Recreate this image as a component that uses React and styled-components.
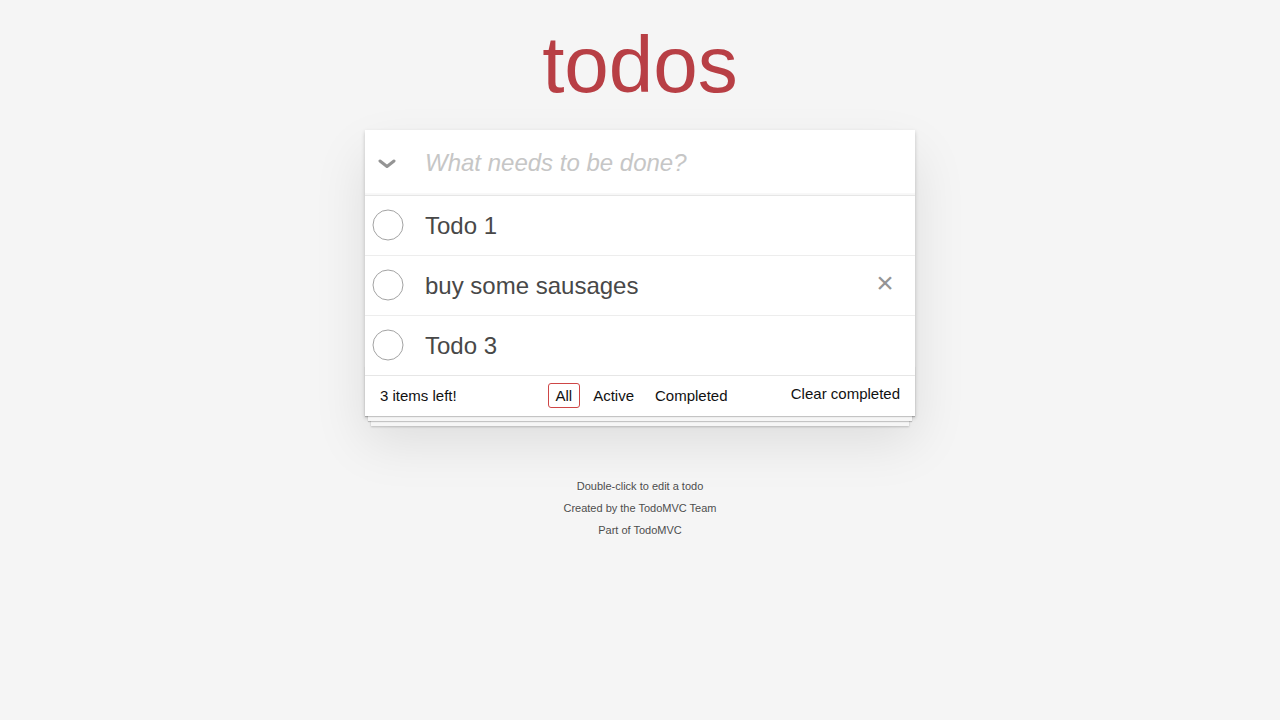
import React, { useState } from "react";
import styled, { createGlobalStyle } from "styled-components";

const GlobalStyle = createGlobalStyle`
  html, body {
    margin: 0;
    padding: 0;
  }
  body {
    font: 14px "Liberation Sans", Arial, sans-serif;
    line-height: 1.4em;
    background: #f5f5f5;
    color: #111111;
  }
`;

const Page = styled.div`
  max-width: 550px;
  min-width: 230px;
  margin: 0 auto;
`;

const Title = styled.h1`
  margin: 25px 0 0;
  height: 80px;
  font-size: 80px;
  line-height: 80px;
  font-weight: 400;
  text-align: center;
  color: #b83f45;
`;

const TodoApp = styled.section`
  background: #fff;
  margin: 25px 0 40px 0;
  position: relative;
  box-shadow: 0 2px 4px 0 rgba(0, 0, 0, 0.2), 0 25px 50px 0 rgba(0, 0, 0, 0.1);
`;

const Header = styled.header`
  display: flex;
  align-items: center;
  height: 65px;
  box-shadow: inset 0 -2px 1px rgba(0, 0, 0, 0.03);
`;

const ToggleAll = styled.button`
  width: 45px;
  height: 65px;
  margin-right: 15px;
  padding: 2px 0 0 13px;
  border: 0;
  background: none;
  display: flex;
  align-items: center;
  cursor: pointer;
`;

const NewTodo = styled.input`
  flex: 1;
  height: 65px;
  padding: 16px 16px 16px 0;
  box-sizing: border-box;
  border: none;
  outline: none;
  background: transparent;
  font-family: "Liberation Sans", Arial, sans-serif;
  font-size: 24px;
  color: #484848;

  &::placeholder {
    font-style: italic;
    font-weight: 400;
    color: #c6c6c6;
  }
`;

const List = styled.ul`
  margin: 0;
  padding: 0;
  list-style: none;
  border-top: 1px solid #e6e6e6;
`;

const Item = styled.li`
  display: flex;
  align-items: center;
  position: relative;
  height: 59px;
  font-size: 24px;
  border-bottom: 1px solid #ededed;

  &:last-child {
    border-bottom: none;
  }
`;

const Toggle = styled.span`
  width: 60px;
  height: 59px;
  display: flex;
  align-items: center;
  padding: 0 0 1px 7px;
  box-sizing: border-box;
`;

const Label = styled.label`
  flex: 1;
  padding-top: 2px;
  font-weight: 400;
  line-height: 1.2;
  color: #484848;
  word-break: break-all;
`;

const Destroy = styled.button`
  position: absolute;
  top: 0;
  bottom: 0;
  right: 10px;
  width: 40px;
  height: 40px;
  margin: auto 0;
  padding: 0 0 8px;
  border: 0;
  background: none;
  font-family: "Liberation Sans", Arial, sans-serif;
  font-size: 30px;
  line-height: 1.1;
  color: #949494;
  cursor: pointer;
  visibility: ${(p) => (p.$show ? "visible" : "hidden")};
`;

const Footer = styled.footer`
  position: relative;
  display: flex;
  align-items: center;
  justify-content: space-between;
  height: 20px;
  padding: 10px 15px;
  border-top: 1px solid #e6e6e6;
  font-size: 15px;
  color: #111;

  &:before {
    content: "";
    position: absolute;
    right: 0;
    bottom: 0;
    left: 0;
    height: 50px;
    overflow: hidden;
    pointer-events: none;
    box-shadow: 0 1px 1px rgba(0, 0, 0, 0.2), 0 8px 0 -3px #f6f6f6,
      0 9px 1px -3px rgba(0, 0, 0, 0.2), 0 16px 0 -6px #f6f6f6,
      0 17px 2px -6px rgba(0, 0, 0, 0.2);
  }
`;

const Count = styled.span`
  position: relative;
  line-height: 20px;
`;

const Filters = styled.ul`
  position: absolute;
  left: 0;
  right: 0;
  top: 7px;
  margin: 0;
  padding: 0 0 0 4px;
  list-style: none;
  display: flex;
  justify-content: center;
`;

const FilterLink = styled.a`
  display: block;
  margin: 0 3px;
  padding: 3px 7px 3px 6px;
  line-height: 17px;
  color: inherit;
  text-decoration: none;
  border: 1px solid ${(p) => (p.$selected ? "#ce4646" : "transparent")};
  border-radius: 3px;
  cursor: pointer;
`;

const ClearCompleted = styled.button`
  position: relative;
  margin-top: -5px;
  padding: 0;
  border: 0;
  background: none;
  font: inherit;
  line-height: 19px;
  color: inherit;
  cursor: pointer;
`;

const Info = styled.footer`
  margin: 65px auto 0;
  color: #4d4d4d;
  font-size: 11px;
  text-shadow: 0 1px 0 rgba(255, 255, 255, 0.5);
  text-align: center;

  p {
    line-height: 1;
    margin: 11px 0;
  }
`;

const Chevron = () => (
  <svg width="18" height="10" viewBox="0 0 18 10">
    <polyline
      points="2,2 9,7.5 16,2"
      fill="none"
      stroke="#949494"
      strokeWidth="3"
      strokeLinecap="round"
      strokeLinejoin="round"
    />
  </svg>
);

const Circle = () => (
  <svg width="32" height="32" viewBox="0 0 32 32">
    <circle cx="16" cy="16" r="15" fill="none" stroke="#a3a3a3" strokeWidth="1" />
  </svg>
);

const todos = [
  { id: 1, title: "Todo 1" },
  { id: 2, title: "buy some sausages" },
  { id: 3, title: "Todo 3" }
];

export default function App() {
  const [hovered, setHovered] = useState(2);

  return (
    <Page>
      <GlobalStyle />
      <Title>todos</Title>
      <TodoApp>
        <Header>
          <ToggleAll aria-label="Mark all as complete">
            <Chevron />
          </ToggleAll>
          <NewTodo placeholder="What needs to be done?" />
        </Header>
        <List>
          {todos.map((t) => (
            <Item key={t.id} onMouseEnter={() => setHovered(t.id)}>
              <Toggle>
                <Circle />
              </Toggle>
              <Label>{t.title}</Label>
              <Destroy $show={hovered === t.id}>×</Destroy>
            </Item>
          ))}
        </List>
        <Footer>
          <Count>3 items left!</Count>
          <Filters>
            <li>
              <FilterLink $selected>All</FilterLink>
            </li>
            <li>
              <FilterLink>Active</FilterLink>
            </li>
            <li>
              <FilterLink>Completed</FilterLink>
            </li>
          </Filters>
          <ClearCompleted>Clear completed</ClearCompleted>
        </Footer>
      </TodoApp>
      <Info>
        <p>Double-click to edit a todo</p>
        <p>Created by the TodoMVC Team</p>
        <p>Part of TodoMVC</p>
      </Info>
    </Page>
  );
}
